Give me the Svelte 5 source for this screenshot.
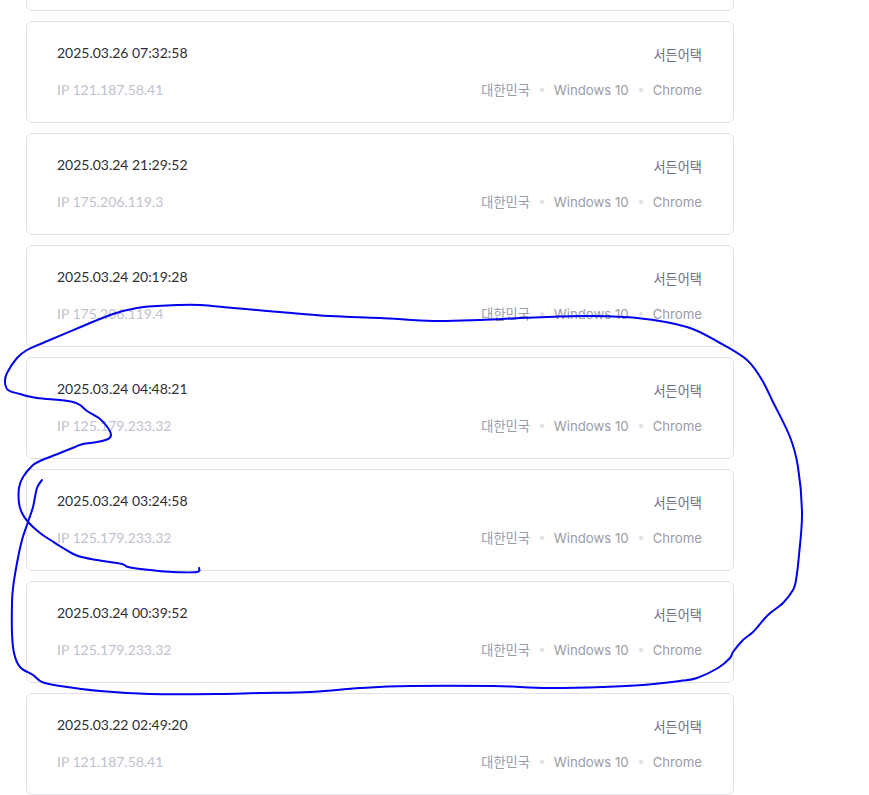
<script>
  const rows = [
    { date: '2025.03.26 07:32:58', ip: '121.187.58.41' },
    { date: '2025.03.24 21:29:52', ip: '175.206.119.3' },
    { date: '2025.03.24 20:19:28', ip: '175.206.119.4' },
    { date: '2025.03.24 04:48:21', ip: '125.179.233.32' },
    { date: '2025.03.24 03:24:58', ip: '125.179.233.32' },
    { date: '2025.03.24 00:39:52', ip: '125.179.233.32' },
    { date: '2025.03.22 02:49:20', ip: '121.187.58.41' }
  ];
  const pts = [
    [199,568],[197,572],[173,572],[150,570],[128,567],[122,564],[97,560],[78,556],[63,548],[52,541],[40,533],[28,522],[22,513],[19,503],[19,488],[23,477],[32,466],[40,461],[60,453],[75,447],[83,444],[97,442],[108,439],[111,435],[108,428],[100,419],[87,411],[80,405],[73,402],[60,400],[37,398],[20,394],[8,390],[5,382],[7,373],[17,358],[27,350],[45,342],[83,326],[113,314],[137,308],[157,306],[177,305],[200,305],[233,308],[267,311],[280,312],[330,316],[380,318],[433,321],[480,320],[520,318],[547,317],[587,316],[637,318],[687,327],[720,343],[747,360],[762,380],[773,402],[790,437],[798,467],[802,513],[799,555],[796,580],[793,590],[783,603],[768,615],[753,632],[743,640],[733,652],[730,658],[718,668],[697,678],[680,681],[643,685],[603,687],[553,688],[520,687],[493,686],[410,686],[360,688],[310,692],[260,693],[217,694],[150,694],[100,691],[60,686],[42,682],[33,675],[20,667],[14,653],[12,633],[12,603],[13,588],[17,563],[22,540],[28,522],[33,507],[37,488],[42,480]
  ];
  // Catmull-Rom through the traced points, so the pen line stays smooth
  function smooth(p) {
    let d = `M${p[0][0]} ${p[0][1]}`;
    for (let i = 0; i < p.length - 1; i++) {
      const a = p[Math.max(i - 1, 0)], b = p[i], c = p[i + 1], e = p[Math.min(i + 2, p.length - 1)];
      const c1 = [b[0] + (c[0] - a[0]) / 6, b[1] + (c[1] - a[1]) / 6];
      const c2 = [c[0] - (e[0] - b[0]) / 6, c[1] - (e[1] - b[1]) / 6];
      d += ` C${c1[0].toFixed(1)} ${c1[1].toFixed(1)} ${c2[0].toFixed(1)} ${c2[1].toFixed(1)} ${c[0]} ${c[1]}`;
    }
    return d;
  }
  const scribble = smooth(pts);
</script>

<div class="page">
  <ul class="list">
    <li class="card"></li>
    {#each rows as row}
      <li class="card">
        <div class="line top">
          <span class="date">{row.date}</span>
          <span class="vendor">서든어택</span>
        </div>
        <div class="line bottom">
          <span class="ip">IP {row.ip}</span>
          <span class="meta">
            <span>대한민국</span><i class="dot"></i><span>Windows 10</span><i class="dot"></i><span>Chrome</span>
          </span>
        </div>
      </li>
    {/each}
  </ul>
  <svg class="ink" width="869" height="795" viewBox="0 0 869 795" aria-hidden="true">
    <path d={scribble} />
  </svg>
</div>

<style>
  :global(body) { background: #fff; }
  .page { position: relative; width: 869px; height: 795px; overflow: hidden; }
  .list {
    list-style: none; margin: -91px 0 0; padding: 0 0 0 26px;
    width: 708px; display: flex; flex-direction: column; gap: 10px;
  }
  .card {
    box-sizing: border-box; height: 102px; padding: 21px 31px 0 30px;
    border: 1px solid #e1e2e7; border-radius: 6px; background: #fff;
    flex: none;
  }
  .line { display: flex; justify-content: space-between; align-items: center; }
  .top { height: 20px; }
  .bottom { height: 20px; margin-top: 17px; }
  .date { font: 14px/20px Lato, sans-serif; color: #2c2f36; letter-spacing: -0.02px; }
  .ip { font: 14px/20px Lato, sans-serif; color: #bfc3d0; letter-spacing: -0.02px; }
  .vendor { font: 13.2px/20px Inter, "Noto Sans CJK KR", sans-serif; color: #6b6e76; margin-top: 4px; }
  .meta { display: flex; align-items: center; font: 13.2px/20px Inter, "Noto Sans CJK KR", sans-serif; color: #9a9ca6; }
  .dot { width: 4px; height: 4px; border-radius: 50%; background: #dcdde3; margin: 0 10px; }
  .ink { position: absolute; left: 0; top: 0; pointer-events: none; }
  .ink path { fill: none; stroke: #0000f0; stroke-width: 2; stroke-linejoin: round; stroke-linecap: round; }
</style>
